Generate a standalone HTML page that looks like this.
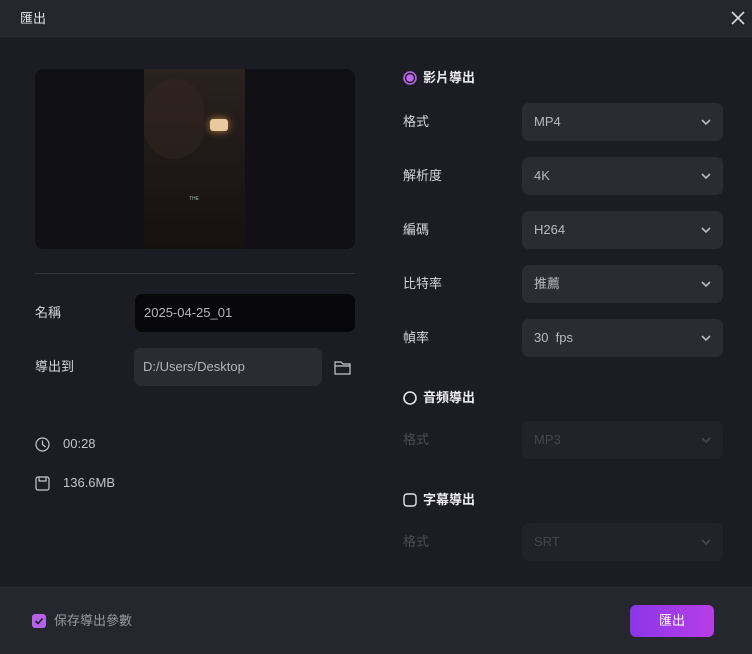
<!DOCTYPE html><html><head><meta charset="utf-8"><style>
*{margin:0;padding:0;box-sizing:border-box}
body{width:752px;height:654px;background:#1c1d24;font-family:"Liberation Sans","Noto Sans CJK TC",sans-serif;color:#d8d8dc;font-size:13px;line-height:16px;position:relative;overflow:hidden}
.a{position:absolute}
.hdr{left:0;top:0;width:752px;height:37px;background:#25262e;border-bottom:1px solid #2c2d35}
.lbl{font-size:13px;color:#d6d6da}
.dd{left:522px;width:201px;height:38px;background:#2b2c33;border-radius:7px;color:#b9b9c0;padding:0 12px;line-height:38px;font-size:13px}
.dd.dis{background:#222329;color:#45464e}
.dd svg{position:absolute;right:12px;top:16px}
.ft{left:0;top:587px;width:752px;height:67px;background:#25262e;border-top:1px solid #2c2d35}
</style></head><body>
<div class="a hdr"></div>
<div class="a" style="left:20px;top:11px;font-size:13px;color:#e4e4e8">匯出</div>
<svg class="a" style="left:731px;top:11px" width="14" height="14"><path d="M1 1L13 13M13 1L1 13" stroke="#d8d8dc" stroke-width="1.6"/></svg>

<div class="a" style="left:35px;top:69px;width:320px;height:180px;background:#111015;border-radius:8px;overflow:hidden">
<div class="a" style="left:109px;top:0;width:101px;height:180px;background:linear-gradient(180deg,#2a221f 0%,#1e1816 50%,#16110f 100%)"></div>
<div class="a" style="left:109px;top:10px;width:60px;height:80px;background:#33261f;border-radius:30px;opacity:.5"></div>
<div class="a" style="left:175px;top:50px;width:18px;height:12px;background:#e8c9a0;border-radius:3px;box-shadow:0 0 8px #c08040"></div>
<div class="a" style="left:154px;top:122px;font-size:5px;color:#9fb59f">THE</div>
</div>
<div class="a" style="left:35px;top:273px;width:320px;height:1px;background:#34353c"></div>

<div class="a lbl" style="left:35px;top:305px">名稱</div>
<div class="a" style="left:135px;top:294px;width:220px;height:38px;background:#08080a;border-radius:7px;padding:0 9px;line-height:38px;color:#b4b4ba">2025-04-25_01</div>
<div class="a lbl" style="left:35px;top:359px">導出到</div>
<div class="a" style="left:134px;top:348px;width:188px;height:38px;background:#2b2c33;border-radius:7px;padding:0 9px;line-height:38px;color:#b4b4ba">D:/Users/Desktop</div>
<svg class="a" style="left:334px;top:360px" width="18" height="15"><path d="M1 2h6l2 2h7v10H1z M1 6h15" fill="none" stroke="#c8c8cc" stroke-width="1.2"/></svg>

<svg class="a" style="left:35px;top:437px" width="15" height="15"><circle cx="7.5" cy="7.5" r="6.5" fill="none" stroke="#c8c8cc" stroke-width="1.2"/><path d="M7.5 3.5v4l3 2.5" fill="none" stroke="#c8c8cc" stroke-width="1.2"/></svg>
<div class="a" style="left:63px;top:436px;color:#c4c4c8">00:28</div>
<svg class="a" style="left:35px;top:476px" width="15" height="15"><rect x="1" y="1" width="13" height="13" rx="2" fill="none" stroke="#c8c8cc" stroke-width="1.2"/><path d="M4 1v4h7V1" fill="none" stroke="#c8c8cc" stroke-width="1.2"/></svg>
<div class="a" style="left:63px;top:475px;color:#c4c4c8">136.6MB</div>

<svg class="a" style="left:403px;top:71px" width="14" height="14"><circle cx="7" cy="7" r="6" fill="none" stroke="#c266f0" stroke-width="1.5"/><circle cx="7" cy="7" r="3.8" fill="#c266f0"/></svg>
<div class="a" style="left:423px;top:70px;font-weight:bold;color:#ececf0">影片導出</div>
<div class="a lbl" style="left:403px;top:114px">格式</div>
<div class="a dd" style="top:103px">MP4<svg width="10" height="7"><path d="M1 1l4 4 4-4" fill="none" stroke="#b9b9c0" stroke-width="1.6"/></svg></div>
<div class="a lbl" style="left:403px;top:168px">解析度</div>
<div class="a dd" style="top:157px">4K<svg width="10" height="7"><path d="M1 1l4 4 4-4" fill="none" stroke="#b9b9c0" stroke-width="1.6"/></svg></div>
<div class="a lbl" style="left:403px;top:222px">編碼</div>
<div class="a dd" style="top:211px">H264<svg width="10" height="7"><path d="M1 1l4 4 4-4" fill="none" stroke="#b9b9c0" stroke-width="1.6"/></svg></div>
<div class="a lbl" style="left:403px;top:276px">比特率</div>
<div class="a dd" style="top:265px">推薦<svg width="10" height="7"><path d="M1 1l4 4 4-4" fill="none" stroke="#b9b9c0" stroke-width="1.6"/></svg></div>
<div class="a lbl" style="left:403px;top:330px">幀率</div>
<div class="a dd" style="top:319px">30&nbsp;&nbsp;fps<svg width="10" height="7"><path d="M1 1l4 4 4-4" fill="none" stroke="#b9b9c0" stroke-width="1.6"/></svg></div>

<svg class="a" style="left:403px;top:391px" width="14" height="14"><circle cx="7" cy="7" r="6" fill="none" stroke="#e4e4e8" stroke-width="1.6"/></svg>
<div class="a" style="left:423px;top:390px;font-weight:bold;color:#ececf0">音頻導出</div>
<div class="a" style="left:403px;top:432px;color:#4c4d55">格式</div>
<div class="a dd dis" style="top:421px">MP3<svg width="10" height="7"><path d="M1 1l4 4 4-4" fill="none" stroke="#45464e" stroke-width="1.6"/></svg></div>

<svg class="a" style="left:403px;top:493px" width="14" height="14"><rect x="1" y="1" width="12" height="12" rx="3" fill="none" stroke="#e4e4e8" stroke-width="1.4"/></svg>
<div class="a" style="left:423px;top:492px;font-weight:bold;color:#ececf0">字幕導出</div>
<div class="a" style="left:403px;top:534px;color:#4c4d55">格式</div>
<div class="a dd dis" style="top:523px">SRT<svg width="10" height="7"><path d="M1 1l4 4 4-4" fill="none" stroke="#45464e" stroke-width="1.6"/></svg></div>

<div class="a ft"></div>
<svg class="a" style="left:32px;top:614px" width="14" height="14"><rect width="14" height="14" rx="3" fill="#b562e8"/><path d="M3.5 7l2.5 2.5 4.5-5" fill="none" stroke="#1c1d24" stroke-width="1.6"/></svg>
<div class="a" style="left:54px;top:613px;color:#9a9aa0">保存導出參數</div>
<div class="a" style="left:630px;top:605px;width:84px;height:32px;border-radius:6px;background:linear-gradient(90deg,#8a36e8,#b83ee6);color:#fff;text-align:center;line-height:32px">匯出</div>
</body></html>
